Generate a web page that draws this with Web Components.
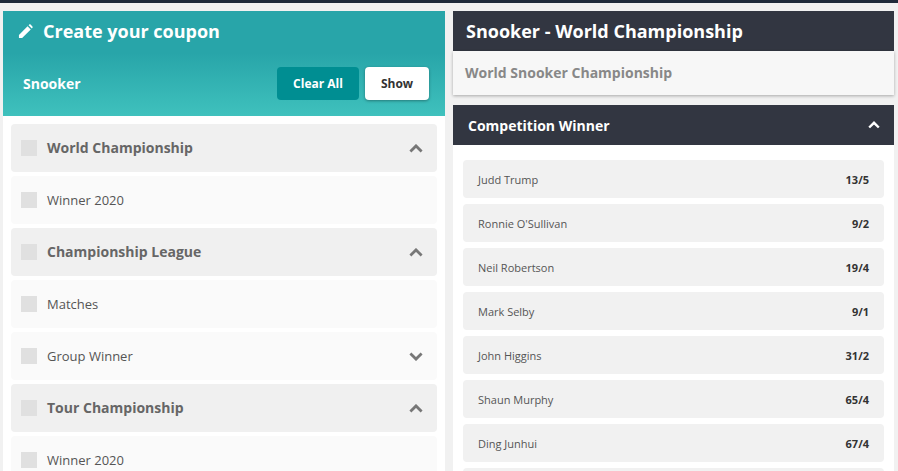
<!DOCTYPE html>
<html>
<head>
<meta charset="utf-8">
<title>Create your coupon</title>
<style>
  html, body { margin: 0; height: 100%; overflow: hidden; }
  body {
    background: #f1f1f1;
    font-family: "Open Sans", sans-serif;
    color: #333;
  }
</style>
</head>
<body>
<coupon-page>
  <coupon-panel slot="left" title="Create your coupon" sport="Snooker">
    <coupon-row heading label="World Championship" chevron="up"></coupon-row>
    <coupon-row label="Winner 2020"></coupon-row>
    <coupon-row heading label="Championship League" chevron="up"></coupon-row>
    <coupon-row label="Matches"></coupon-row>
    <coupon-row label="Group Winner" chevron="down"></coupon-row>
    <coupon-row heading label="Tour Championship" chevron="up"></coupon-row>
    <coupon-row label="Winner 2020"></coupon-row>
  </coupon-panel>
  <market-panel slot="right" title="Snooker - World Championship" subtitle="World Snooker Championship" market="Competition Winner">
    <odds-row name="Judd Trump" price="13/5"></odds-row>
    <odds-row name="Ronnie O'Sullivan" price="9/2"></odds-row>
    <odds-row name="Neil Robertson" price="19/4"></odds-row>
    <odds-row name="Mark Selby" price="9/1"></odds-row>
    <odds-row name="John Higgins" price="31/2"></odds-row>
    <odds-row name="Shaun Murphy" price="65/4"></odds-row>
    <odds-row name="Ding Junhui" price="67/4"></odds-row>
    <!-- next row only peeks in at the bottom edge, no text visible -->
    <odds-row></odds-row>
  </market-panel>
</coupon-page>

<script>
// chevron shared by the rows and the market header
const chevron = (dir, color, w = 14, h = 9) => `
  <svg width="${w}" height="${h}" viewBox="0 0 14 9" style="display:block;${dir === 'down' ? 'transform:rotate(180deg)' : ''}">
    <path d="M1.4 7.4 7 1.9l5.6 5.5" fill="none" stroke="${color}" stroke-width="2.8"/>
  </svg>`;

class CouponPage extends HTMLElement {
  connectedCallback() {
    this.attachShadow({mode: 'open'});
    this.shadowRoot.innerHTML = `
      <style>
        :host { display: block; height: 471px; overflow: hidden; box-sizing: border-box; }
        .bar { height: 3px; background: #1f2a3a; }
        .cols {
          display: grid;
          grid-template-columns: 442px 441px;
          column-gap: 8px;
          padding: 8px 0 0 3px;
        }
      </style>
      <div class="bar"></div>
      <div class="cols">
        <slot name="left"></slot>
        <slot name="right"></slot>
      </div>`;
  }
}

class CouponPanel extends HTMLElement {
  connectedCallback() {
    this.attachShadow({mode: 'open'});
    this.shadowRoot.innerHTML = `
      <style>
        :host { display: block; background: #fff; }
        header {
          height: 105px;
          box-sizing: border-box;
          background: linear-gradient(to bottom, #28a5a9 0%, #28a5a9 40%, #3fc1bd 100%);
          color: #fff;
          padding: 7px 16px 0 15px;
        }
        .title {
          display: flex;
          align-items: center;
          gap: 10px;
          height: 26px;
          font-size: 18px;
          font-weight: 700;
        }
        .title svg { display: block; }
        .tools {
          display: flex;
          align-items: center;
          gap: 6px;
          margin-top: 23px;
          padding-left: 5px;
        }
        .sport { flex: 1; font-size: 14px; font-weight: 700; }
        button {
          height: 33px;
          border: 0;
          border-radius: 4px;
          font: 700 12px "Open Sans", sans-serif;
          padding: 0;
        }
        .clear { width: 82px; background: #008e92; color: #fff; }
        .show { width: 64px; background: #fff; color: #333; box-shadow: 0 1px 3px rgba(0,0,0,.35); }
        .list {
          display: flex;
          flex-direction: column;
          gap: 4px;
          padding: 8px 8px 0;
        }
      </style>
      <header>
        <div class="title">
          <svg width="15" height="15" viewBox="0 0 16 16">
            <path fill="#fff" d="M1 11.6 10.2 2.4l3.4 3.4L4.4 15H1zM11.3 1.3l.7-.7c.4-.4 1-.4 1.4 0l2 2c.4.4.4 1 0 1.4l-.7.7z"/>
          </svg>
          <span>${this.getAttribute('title')}</span>
        </div>
        <div class="tools">
          <span class="sport">${this.getAttribute('sport')}</span>
          <button class="clear">Clear All</button>
          <button class="show">Show</button>
        </div>
      </header>
      <div class="list"><slot></slot></div>`;
  }
}

class CouponRow extends HTMLElement {
  connectedCallback() {
    const dir = this.getAttribute('chevron');
    this.attachShadow({mode: 'open'});
    this.shadowRoot.innerHTML = `
      <style>
        :host {
          display: flex;
          align-items: center;
          height: 48px;
          box-sizing: border-box;
          padding: 0 14px 0 10px;
          border-radius: 4px;
          background: #fafafa;
          color: #555;
          font-size: 13px;
        }
        :host([heading]) {
          background: #f0f0f0;
          color: #666;
          font-size: 14px;
          font-weight: 700;
        }
        :host([heading]) .label { margin-bottom: 2px; }
        .box { width: 16px; height: 16px; background: #e0e0e0; margin-right: 10px; }
        .label { flex: 1; }
      </style>
      <span class="box"></span>
      <span class="label">${this.getAttribute('label')}</span>
      ${dir ? chevron(dir, '#777') : ''}`;
  }
}

class MarketPanel extends HTMLElement {
  connectedCallback() {
    this.attachShadow({mode: 'open'});
    this.shadowRoot.innerHTML = `
      <style>
        :host { display: block; }
        h1, h2, h3 { margin: 0; }
        .top {
          height: 40px;
          box-sizing: border-box;
          background: #323641;
          color: #fff;
          padding-left: 13px;
          font-size: 18px;
          line-height: 40px;
          font-weight: 700;
        }
        .sub {
          height: 44px;
          box-sizing: border-box;
          background: #f7f7f7;
          color: #888;
          padding-left: 12px;
          font-size: 14px;
          line-height: 44px;
          font-weight: 700;
          box-shadow: 0 1px 3px rgba(0,0,0,.3);
        }
        .market {
          display: flex;
          align-items: center;
          justify-content: space-between;
          height: 40px;
          box-sizing: border-box;
          margin-top: 10px;
          padding: 0 14px 0 15px;
          background: #323641;
          color: #fff;
          font-size: 14px;
          font-weight: 700;
        }
        .rows {
          display: flex;
          flex-direction: column;
          gap: 6px;
          background: #fff;
          padding: 15px 10px 0;
        }
      </style>
      <h1 class="top">${this.getAttribute('title')}</h1>
      <h2 class="sub">${this.getAttribute('subtitle')}</h2>
      <h3 class="market">
        <span>${this.getAttribute('market')}</span>
        ${chevron('up', '#fff', 12, 8)}
      </h3>
      <div class="rows"><slot></slot></div>`;
  }
}

class OddsRow extends HTMLElement {
  connectedCallback() {
    this.attachShadow({mode: 'open'});
    this.shadowRoot.innerHTML = `
      <style>
        :host {
          display: flex;
          align-items: center;
          justify-content: space-between;
          height: 38px;
          box-sizing: border-box;
          padding: 0 15px;
          border-radius: 4px;
          background: #f1f1f1;
          color: #555;
          font-size: 11px;
        }
        b { color: #333; font-weight: 700; }
      </style>
      <span>${this.getAttribute('name') || ''}</span>
      <b>${this.getAttribute('price') || ''}</b>`;
  }
}

customElements.define('coupon-page', CouponPage);
customElements.define('coupon-panel', CouponPanel);
customElements.define('coupon-row', CouponRow);
customElements.define('market-panel', MarketPanel);
customElements.define('odds-row', OddsRow);
</script>
</body>
</html>
